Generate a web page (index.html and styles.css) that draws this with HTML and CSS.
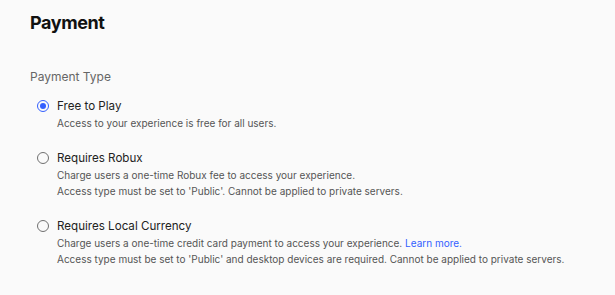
FILE: index.html
```html
<!DOCTYPE html>
<html>
<head>
<meta charset="utf-8">
<link rel="stylesheet" href="styles.css">
</head>
<body>
<div class="page">
  <h1 class="title">Payment</h1>
  <div class="section-label">Payment Type</div>
  <div class="options">
    <div class="option">
      <span class="radio checked"></span>
      <div class="text">
        <div class="label">Free to Play</div>
        <div class="desc">Access to your experience is free for all users.</div>
      </div>
    </div>
    <div class="option">
      <span class="radio"></span>
      <div class="text">
        <div class="label">Requires Robux</div>
        <div class="desc">Charge users a one-time Robux fee to access your experience.</div>
        <div class="desc">Access type must be set to 'Public'. Cannot be applied to private servers.</div>
      </div>
    </div>
    <div class="option">
      <span class="radio"></span>
      <div class="text">
        <div class="label">Requires Local Currency</div>
        <div class="desc">Charge users a one-time credit card payment to access your experience. <a class="link" href="#">Learn more.</a></div>
        <div class="desc">Access type must be set to 'Public' and desktop devices are required. Cannot be applied to private servers.</div>
      </div>
    </div>
  </div>
</div>
</body>
</html>
```

FILE: styles.css
```css
html, body {
  margin: 0;
  padding: 0;
  background: #fafafa;
}
body {
  font-family: "Inter", "Noto Sans", sans-serif;
  color: #1d1d1f;
}
.page {
  padding: 11px 30px;
}
.title {
  margin: 0;
  font-size: 18px;
  font-weight: 700;
  letter-spacing: -0.4px;
  line-height: 24px;
  color: #111;
}
.section-label {
  margin-top: 34px;
  font-size: 12px;
  line-height: 16px;
  color: #666;
}
.options {
  display: flex;
  flex-direction: column;
  gap: 19px;
  margin-top: 13px;
}
.option {
  display: flex;
  align-items: flex-start;
  padding-left: 7px;
  gap: 8px;
}
.radio {
  flex: none;
  width: 12px;
  height: 12px;
  box-sizing: border-box;
  border: 1.5px solid #707070;
  border-radius: 50%;
  margin-top: 2px;
  position: relative;
}
.radio.checked {
  border-color: #335fff;
}
.radio.checked::after {
  content: "";
  position: absolute;
  left: 50%;
  top: 50%;
  width: 6px;
  height: 6px;
  margin: -3px 0 0 -3px;
  border-radius: 50%;
  background: #335fff;
}
.label {
  font-size: 11.6px;
  line-height: 16px;
  color: #222;
}
.desc {
  font-size: 10px;
  line-height: 16px;
  color: #555;
}
.label + .desc {
  margin-top: 1px;
}
.link {
  color: #335fff;
  text-decoration: none;
}
```
